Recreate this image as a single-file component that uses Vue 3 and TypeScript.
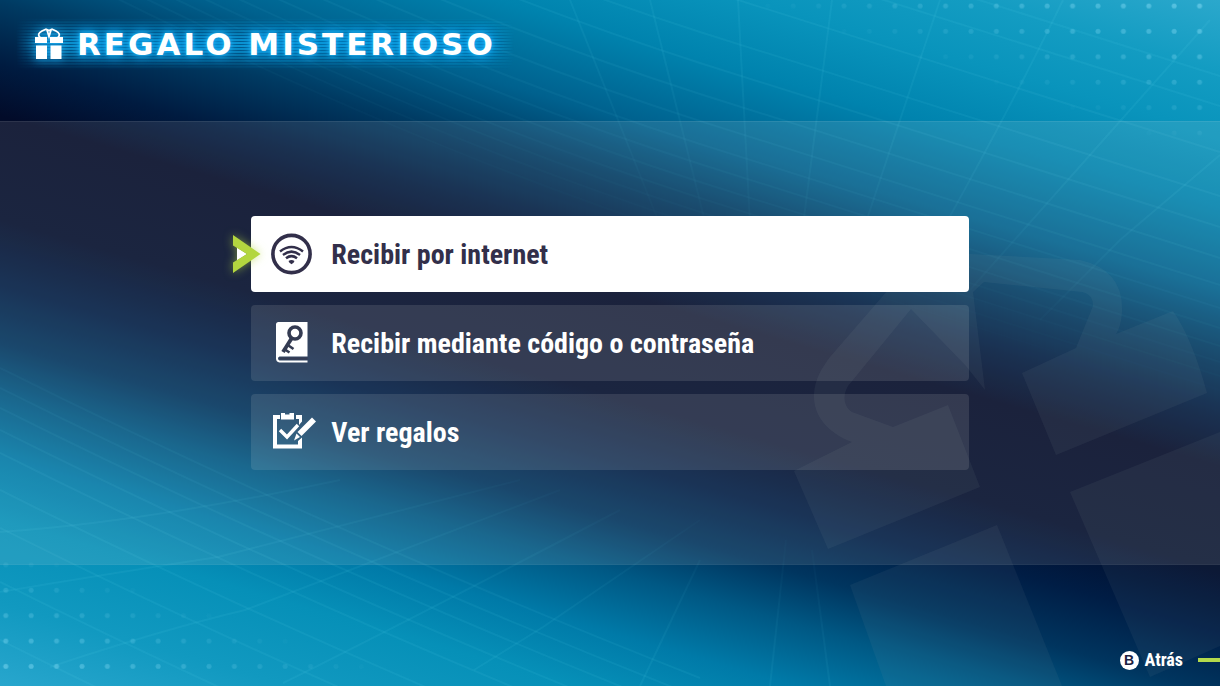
<script setup lang="ts">
import { ref } from 'vue'

type IconName = 'wifi' | 'key' | 'list'

interface MenuOption {
  icon: IconName
  label: string
}

const options: MenuOption[] = [
  { icon: 'wifi', label: 'Recibir por internet' },
  { icon: 'key', label: 'Recibir mediante código o contraseña' },
  { icon: 'list', label: 'Ver regalos' },
]

const selected = ref(0)

// Long lines of the upper grid: height where each one crosses x = 700
const upperRows: number[] = [-88, -58, -12, 32, 63, 94, 121, 144, 164, 182, 198, 212, 226, 240]
const lowerRows: number[] = [368, 388, 408, 430, 453, 490, 528, 582, 640]
</script>

<template>
  <div class="screen">
    <svg class="backdrop" viewBox="0 0 1220 686" preserveAspectRatio="xMidYMid slice" aria-hidden="true">
      <defs>
        <pattern id="dots" x="-7" y="-7" width="25.4" height="25.4" patternUnits="userSpaceOnUse">
          <circle cx="12.8" cy="13" r="2.5" fill="#7fd8f2" />
        </pattern>
        <linearGradient id="fadeTopDots" gradientUnits="userSpaceOnUse" x1="1220" y1="0" x2="1170" y2="150">
          <stop offset="0" stop-color="#fff" stop-opacity=".6" />
          <stop offset="1" stop-color="#fff" stop-opacity="0" />
        </linearGradient>
        <linearGradient id="fadeBottomDots" gradientUnits="userSpaceOnUse" x1="0" y1="686" x2="46" y2="550">
          <stop offset="0" stop-color="#fff" stop-opacity=".6" />
          <stop offset="1" stop-color="#fff" stop-opacity="0" />
        </linearGradient>
        <linearGradient id="fadeGrid" gradientUnits="userSpaceOnUse" x1="473" y1="821" x2="747" y2="-135">
          <stop offset="0" stop-color="#fff" />
          <stop offset=".2" stop-color="#fff" stop-opacity=".8" />
          <stop offset=".4" stop-color="#fff" stop-opacity="0" />
          <stop offset=".6" stop-color="#fff" stop-opacity="0" />
          <stop offset=".8" stop-color="#fff" stop-opacity=".8" />
          <stop offset="1" stop-color="#fff" />
        </linearGradient>
        <mask id="maskTop" maskUnits="userSpaceOnUse" x="0" y="0" width="1220" height="686">
          <rect width="1220" height="686" fill="url(#fadeTopDots)" />
        </mask>
        <mask id="maskBottom" maskUnits="userSpaceOnUse" x="0" y="0" width="1220" height="686">
          <rect width="1220" height="686" fill="url(#fadeBottomDots)" />
        </mask>
        <mask id="maskGrid" maskUnits="userSpaceOnUse" x="0" y="0" width="1220" height="686">
          <rect width="1220" height="686" fill="url(#fadeGrid)" />
        </mask>
      </defs>

      <g mask="url(#maskGrid)" fill="none" stroke="#4fd0e6" stroke-opacity=".12" stroke-width="2">
        <path v-for="y in upperRows" :key="'u' + y" :d="`M100 ${y - 250} Q420 ${y - 90} 700 ${y} L1220 ${y + 164}`" />
        <path v-for="y in lowerRows" :key="'l' + y" :d="`M0 ${y} Q320 ${y + 160} 700 ${y + 310}`" />
        <path d="M738 0L752 260M832 0L796 280M940 0L850 270M1063 0Q1010 110 920 270M1210 20L970 290M1220 155L1120 240L1040 320M650 0L712 250M570 0L670 250" />
        <path d="M0 532Q145 522 340 480M0 592Q107 574 218 557L520 480M50 667Q161 630 245 610L560 490M283 683Q400 625 620 510M474 670L543 627L700 520M786 540L770 686M812 550L830 686M640 686L700 560" />
      </g>
      <rect width="1220" height="686" fill="url(#dots)" mask="url(#maskTop)" />
      <rect width="1220" height="686" fill="url(#dots)" mask="url(#maskBottom)" />

      <g class="gift-shade">
        <path
          fill-rule="evenodd"
          d="M794 471L852 442C826 432 813 414 814 394C815 378 822 368 830 357L888 290Q920 253 970 254L1080 260Q1124 270 1122 312Q1121 327 1116 334L1173 311Q1192 338 1207 393L1056 455L1022 373L1076 348L1093 306Q1093 294 1082 292L984 282L973 292L985 390L966 366L911 309L848 386C842 396 844 407 852 412L893 427L948 405L980 487L828 549Z"
        />
        <path d="M850 585L997 525L1062 686H886Z" />
        <path d="M1070 492L1220 432V646L1150 677Z" />
      </g>
    </svg>

    <header class="header">
      <h1 class="title">
        <svg class="title-icon" viewBox="0 0 28 32" aria-hidden="true">
          <path fill="#fff" d="M0 9h12v6H0zM15 9h13v6H15zM1 17.500h11V31H1zM15.500 17.500h11V31H15.500z" />
          <path fill="none" stroke="#fff" stroke-width="1.800" d="M5 9.500C2.500 7 3.500 5 7 3L11 1.200L14 2.500L17 1.200L21 3C24.500 5 25.500 7 23 9.500M12 2L14 8.500L16 2" />
        </svg>
        <span>REGALO MISTERIOSO</span>
      </h1>
    </header>

    <main class="panel">
      <ul class="menu">
        <li v-for="(option, index) in options" :key="option.icon">
          <button
            type="button"
            class="option"
            :class="{ active: selected === index }"
            @click="selected = index"
          >
            <svg v-if="selected === index" class="cursor" viewBox="0 0 28 38" aria-hidden="true">
              <path d="M4 12.500L14 19L4 25.500Z" fill="#fff" />
              <path d="M0 0L27.500 19L0 38V27.500L14 19L0 10.500Z" fill="#b3d63f" />
            </svg>
            <svg v-if="option.icon === 'wifi'" class="icon" viewBox="0 0 44 44" aria-hidden="true">
              <g fill="none" stroke="currentColor">
                <circle cx="20.500" cy="22" r="18.600" stroke-width="3.600" />
                <path stroke-width="2.500" d="M9 19.500Q20.500 10.500 32 19.500M12 23Q20.500 16.200 29 23M15 26.300Q20.500 22 26 26.300" />
              </g>
              <path fill="currentColor" d="M17.500 29Q20.500 27 23.500 29L22.500 30.700L20.500 32.200L18.500 30.700Z" />
            </svg>
            <svg v-else-if="option.icon === 'key'" class="icon" viewBox="0 0 44 44" aria-hidden="true">
              <path fill="currentColor" d="M7.500 1H36.500V35.500H8.500Q7 36 7 37.500Q7 39 8.500 39.500H36.500V41.500H8.500Q5 41 5 37.500V3.500Q5 1 7.500 1Z" />
              <g fill="none" stroke="#343b52">
                <circle cx="24" cy="12" r="6" stroke-width="3.600" />
                <path stroke-width="3.800" d="M20.500 17.500L12 31" />
                <path stroke-width="2.600" d="M17.500 24.500L22.500 28M14 28.500L18.500 31.500" />
              </g>
              <path stroke="#343b52" stroke-width="2.200" d="M8.500 37.500H36.500" />
            </svg>
            <svg v-else class="icon" viewBox="0 0 44 44" aria-hidden="true">
              <g fill="currentColor">
                <path d="M2 5H9V9H6V34.500H27V31L31 27.500V38.500H2Z" />
                <path d="M10 4.500V3H14V4.500H18.500V3H23V9.500H10Z" />
                <path d="M25 5H31V11.500L28 15V9H25Z" />
                <path d="M41 7.500L45 11.500L30.500 26L26.500 22Z" />
                <path d="M25.500 23.500L29 27L23 30.500Z" />
              </g>
              <path fill="none" stroke="currentColor" stroke-width="3.400" d="M9 20L16 27L27 15" />
            </svg>
            <span class="label">{{ option.label }}</span>
          </button>
        </li>
      </ul>
    </main>

    <footer class="footer">
      <button type="button" class="back">
        <span class="key">B</span>
        <span>Atrás</span>
      </button>
      <span class="dash"></span>
    </footer>
  </div>
</template>

<style>
body {
  margin: 0;
}
</style>

<style scoped>
.screen {
  position: relative;
  display: flex;
  flex-direction: column;
  min-height: 100vh;
  overflow: hidden;
  color: #fff;
  font-family: "Roboto Condensed", "Liberation Sans Narrow", "Liberation Sans", sans-serif;
  background: linear-gradient(
    16deg,
    #28a6cd 0%,
    #1199c0 8%,
    #0690b8 16%,
    #007aa8 22%,
    #005884 28%,
    #00355f 33%,
    #001d45 39%,
    #020e2d 45%,
    #020b29 55%,
    #001b40 60%,
    #003a62 66%,
    #00618e 72%,
    #0083ae 80%,
    #0994bc 87%,
    #139cc2 93%,
    #2ba8cc 100%
  );
}

.backdrop {
  position: absolute;
  inset: 0;
  width: 100%;
  height: 100%;
}

.gift-shade {
  fill: #9db0a8;
  fill-opacity: 0.07;
}

.header,
.footer {
  position: relative;
  flex: 0 0 121px;
  box-sizing: border-box;
  display: flex;
}

.header {
  padding: 20px 20px 0;
  align-items: flex-start;
}

.title {
  position: relative;
  display: flex;
  align-items: center;
  gap: 14px;
  margin: 0;
  padding: 0 14px 0 15px;
  height: 48px;
  font-family: "DejaVu Sans", sans-serif;
  font-size: 31px;
  font-weight: 700;
  line-height: 48px;
  letter-spacing: 3px;
  white-space: nowrap;
  text-shadow: 0 0 4px #22b8f8, 0 0 10px #0c9ae4, 0 0 14px #0c9ae4;
}

.title::before {
  content: "";
  position: absolute;
  inset: -2px -4px;
  background: repeating-linear-gradient(#109fdf 0 2px, #00588f 2px 3px);
  opacity: 0.85;
  mask-image: linear-gradient(transparent, #000 45%, #000 55%, transparent),
    linear-gradient(90deg, transparent, #000 6%, #000 94%, transparent);
  mask-composite: intersect;
}

.title > * {
  position: relative;
}

.title-icon {
  width: 28px;
  height: 32px;
  filter: drop-shadow(0 0 5px #18a4ea);
}

.panel {
  position: relative;
  flex: 1 0 auto;
  display: flex;
  align-items: center;
  justify-content: center;
  background: rgba(255, 242, 232, 0.1);
  box-shadow: inset 0 1px rgba(255, 255, 255, 0.08), inset 0 -1px rgba(255, 255, 255, 0.04);
}

.menu {
  display: flex;
  flex-direction: column;
  gap: 13px;
  width: 58.8%;
  max-width: 960px;
  margin: 0;
  padding: 0;
  list-style: none;
}

.option {
  position: relative;
  display: flex;
  align-items: center;
  gap: 16px;
  width: 100%;
  height: 76px;
  padding: 0 20px;
  border: 0;
  border-radius: 4px;
  background: rgba(255, 252, 246, 0.11);
  color: #fff;
  font: inherit;
  font-size: 28px;
  font-weight: 700;
  text-align: left;
  cursor: pointer;
}

.option.active {
  background: #fff;
  color: #322f4a;
}

.icon {
  flex: none;
  width: 44px;
  height: 44px;
  overflow: visible;
}

.cursor {
  position: absolute;
  left: -18px;
  top: 19px;
  width: 28px;
  height: 38px;
  overflow: visible;
  filter: drop-shadow(0 0 5px rgba(179, 214, 63, 0.6));
}

.footer {
  align-items: flex-end;
  justify-content: flex-end;
  gap: 15px;
  padding-bottom: 16px;
}

.back {
  display: flex;
  align-items: center;
  gap: 6px;
  padding: 0;
  border: 0;
  background: none;
  color: #fff;
  font: inherit;
  font-size: 18px;
  font-weight: 700;
  line-height: 20px;
  cursor: pointer;
}

.key {
  width: 19px;
  height: 19px;
  border-radius: 50%;
  background: #fff;
  color: #1c2142;
  font-family: "Liberation Sans", sans-serif;
  font-size: 14px;
  line-height: 19px;
  text-align: center;
}

.dash {
  width: 22px;
  height: 4px;
  margin-bottom: 8px;
  background: #b3d94c;
}
</style>
